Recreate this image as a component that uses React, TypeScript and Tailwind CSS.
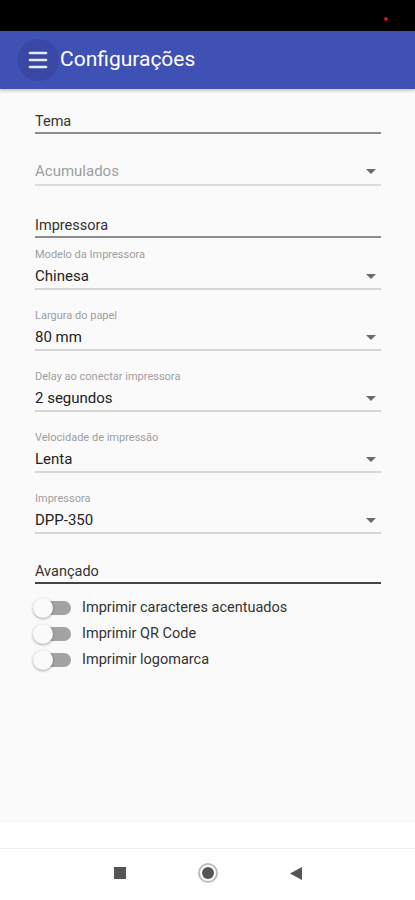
import { Menu } from "lucide-react";

type Field = { label: string; value: string };

const fields: Field[] = [
  { label: "Modelo da Impressora", value: "Chinesa" },
  { label: "Largura do papel", value: "80 mm" },
  { label: "Delay ao conectar impressora", value: "2 segundos" },
  { label: "Velocidade de impressão", value: "Lenta" },
  { label: "Impressora", value: "DPP-350" },
];

const toggles = ["Imprimir caracteres acentuados", "Imprimir QR Code", "Imprimir logomarca"];

function Caret() {
  return (
    <svg width="10" height="5" viewBox="0 0 10 5" className="mr-[5px] shrink-0">
      <path d="M0 0 L10 0 L5 5 Z" fill="#6b6b6b" />
    </svg>
  );
}

function SectionHeader({ title, dark }: { title: string; dark?: boolean }) {
  return (
    <div
      className={`border-b-2 text-[14.5px] leading-[20px] text-[#333] ${dark ? "border-[#444]" : "border-[#8c8c8c]"}`}
    >
      {title}
    </div>
  );
}

function SelectField({ label, value }: Field) {
  return (
    <div className="mt-[19px]">
      <p className="text-[11px] leading-[14px] text-[#9e9e9e]">{label}</p>
      <div className="mt-[3px] flex items-center justify-between border-b-2 border-[#d6d6d6] pb-[1px]">
        <span className="text-[15px] leading-[22px] text-[#222]">{value}</span>
        <Caret />
      </div>
    </div>
  );
}

function Toggle({ label }: { label: string }) {
  return (
    <div className="flex h-[26px] items-center">
      <div className="relative h-[20px] w-[40px] shrink-0">
        <div className="absolute left-[4px] top-[3px] h-[14px] w-[34px] rounded-full bg-[#a3a3a3]" />
        <div className="absolute left-[0px] top-0 h-[20px] w-[20px] rounded-full bg-[#fafafa] shadow-[0_1px_3px_rgba(0,0,0,0.35)]" />
      </div>
      <span className="ml-[9px] text-[14.5px] text-[#333]">{label}</span>
    </div>
  );
}

export default function App() {
  return (
    <div className="flex h-[900px] w-[415px] flex-col bg-[#fafafa] font-['Roboto',sans-serif]">
      {/* status bar */}
      <div className="relative h-[31px] shrink-0 bg-black">
        <span className="absolute left-[384px] top-[17px] h-[4px] w-[4px] rounded-full bg-[#c4161c]" />
      </div>

      {/* app bar */}
      <div className="flex h-[58px] shrink-0 items-center bg-[#3f51b5] shadow-[0_2px_3px_rgba(0,0,0,0.2)]">
        <div className="ml-[17px] grid h-[42px] w-[42px] place-items-center rounded-full bg-[#3848a4]">
          <Menu className="h-[24px] w-[24px] text-[#e8eaf6]" strokeWidth={2.6} />
        </div>
        <h1 className="ml-[1px] text-[21px] text-white">Configurações</h1>
      </div>

      {/* content */}
      <div className="flex-1 pl-[35px] pr-[34px] pt-[23px]">
        <SectionHeader title="Tema" />
        <div className="mt-[26px] flex items-center justify-between border-b-2 border-[#dcdcdc] pb-[2px]">
          <span className="text-[15px] leading-[22px] text-[#9e9e9e]">Acumulados</span>
          <Caret />
        </div>

        <div className="mt-[30px]">
          <SectionHeader title="Impressora" />
        </div>
        <div className="-mt-[9px]">
          {fields.map((f) => (
            <SelectField key={f.label + f.value} label={f.label} value={f.value} />
          ))}
        </div>

        <div className="mt-[28px]">
          <SectionHeader title="Avançado" dark />
        </div>
        <div className="ml-[-2px] mt-[11px]">
          {toggles.map((t) => (
            <Toggle key={t} label={t} />
          ))}
        </div>
      </div>

      {/* bottom area */}
      <div className="h-[26px] shrink-0 border-b border-[#ececec] bg-white" />
      <div className="flex h-[51px] shrink-0 items-center justify-center gap-[72px] bg-white pb-[3px]">
        <span className="h-[12px] w-[12px] bg-[#555]" />
        <span className="grid h-[20px] w-[20px] place-items-center rounded-full border-2 border-[#bdbdbd]">
          <span className="h-[12px] w-[12px] rounded-full bg-[#555]" />
        </span>
        <svg width="12" height="13" viewBox="0 0 12 13">
          <path d="M12 0 L12 13 L0 6.5 Z" fill="#555" />
        </svg>
      </div>
    </div>
  );
}
